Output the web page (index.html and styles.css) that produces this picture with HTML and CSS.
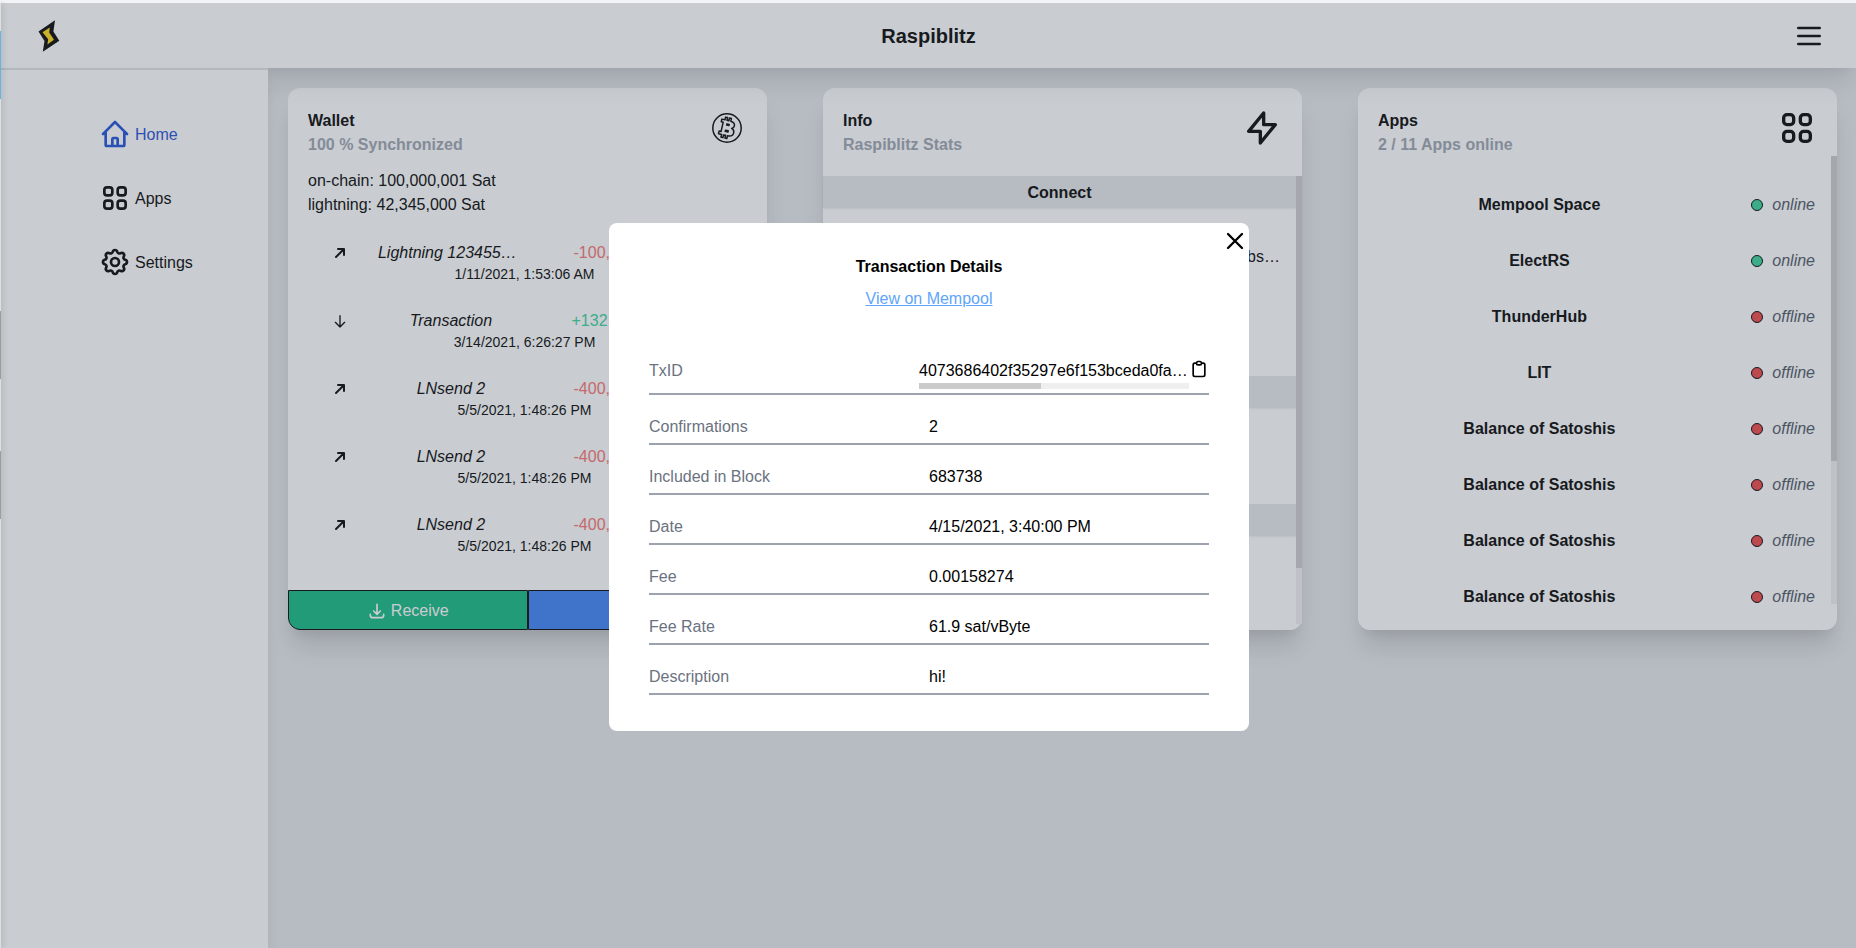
FILE: index.html
```html
<!DOCTYPE html>
<html lang="en">
<head>
<meta charset="utf-8">
<title>Raspiblitz</title>
<link rel="stylesheet" href="styles.css">
</head>
<body>
<div class="edge"></div>
<div class="app">
  <header class="topbar">
    <svg class="logo" viewBox="0 0 22 32"><path d="M.5 11.5 17 .3 15.400 11.500 21.300 20.800 4.800 31.800 6.500 21Z" fill="#000"/><path d="M4.500 12.300 11.800 7.500 11.200 12.600 16 19.800 9.400 24.600 10.200 19.300Z" fill="#ffda10"/></svg>
    <h1 class="brand">Raspiblitz</h1>
    <button class="icon-btn menu-btn" aria-label="Menu"><svg class="i32" viewBox="0 0 24 24"><path d="M4 6h16M4 12h16M4 18h16"/></svg></button>
  </header>
  <div class="body">
    <nav class="sidebar">
      <a class="nav-link active" href="#home"><svg class="i32" viewBox="0 0 24 24"><path d="M3 12l2-2m0 0l7-7 7 7M5 10v10a1 1 0 001 1h3m10-11l2 2m-2-2v10a1 1 0 01-1 1h-3m-6 0a1 1 0 001-1v-4a1 1 0 011-1h2a1 1 0 011 1v4a1 1 0 001 1m-6 0h6"/></svg><span>Home</span></a>
      <a class="nav-link" href="#apps"><svg class="i32" viewBox="0 0 24 24"><path d="M4 6a2 2 0 012-2h2a2 2 0 012 2v2a2 2 0 01-2 2H6a2 2 0 01-2-2V6zM14 6a2 2 0 012-2h2a2 2 0 012 2v2a2 2 0 01-2 2h-2a2 2 0 01-2-2V6zM4 16a2 2 0 012-2h2a2 2 0 012 2v2a2 2 0 01-2 2H6a2 2 0 01-2-2v-2zM14 16a2 2 0 012-2h2a2 2 0 012 2v2a2 2 0 01-2 2h-2a2 2 0 01-2-2v-2z"/></svg><span>Apps</span></a>
      <a class="nav-link" href="#settings"><svg class="i32" viewBox="0 0 24 24"><path d="M10.325 4.317c.426-1.756 2.924-1.756 3.35 0a1.724 1.724 0 002.573 1.066c1.543-.94 3.31.826 2.37 2.37a1.724 1.724 0 001.065 2.572c1.756.426 1.756 2.924 0 3.35a1.724 1.724 0 00-1.066 2.573c.94 1.543-.826 3.31-2.37 2.37a1.724 1.724 0 00-2.572 1.065c-.426 1.756-2.924 1.756-3.35 0a1.724 1.724 0 00-2.573-1.066c-1.543.94-3.31-.826-2.37-2.37a1.724 1.724 0 00-1.065-2.572c-1.756-.426-1.756-2.924 0-3.35a1.724 1.724 0 001.066-2.573c-.94-1.543.826-3.31 2.37-2.37.996.608 2.296.07 2.572-1.065z"/><path d="M15 12a3 3 0 11-6 0 3 3 0 016 0z"/></svg><span>Settings</span></a>
    </nav>
    <main class="cards">
      <section class="card">
        <div class="card-head">
          <div class="card-text"><h2 class="card-title">Wallet</h2><p class="card-sub">100 % Synchronized</p></div>
          <svg class="i40" viewBox="0 0 40 40"><g stroke-width="1.500"><circle cx="20" cy="20" r="14.200"/><g transform="rotate(13 20 20)"><path d="M13 12.500h3.200V9.700h2v2.800h2V9.700h2v2.800c3 .3 4.500 1.600 4.500 3.700 0 1.500-.8 2.600-2 3.200 1.900.6 2.900 1.900 2.900 3.800 0 2.700-1.800 4.200-5.400 4.300v2.800h-2v-2.800h-2v2.800h-2v-2.800H13v-2.700h2v-9.600h-2z"/><path d="M19 16h2.300v1.200H19zM19 22.500h2.800v1.200H19z"/></g></g></svg>
        </div>
        <div class="balances"><p>on-chain: 100,000,001 Sat</p><p>lightning: 42,345,000 Sat</p></div>
        <ul class="tx-list">
          <li class="tx"><span class="tx-icon"><svg class="i16 out" viewBox="0 0 24 24"><path d="M6 18L18 6M9 6h9v9"/></svg></span><span class="tx-name">Lightning 1234556789</span><span class="tx-amount minus">-100,000,000 Sat</span><time class="tx-date">1/11/2021, 1:53:06 AM</time></li>
          <li class="tx"><span class="tx-icon"><svg class="i16" viewBox="0 0 24 24"><path d="M19 14l-7 7m0 0l-7-7m7 7V4"/></svg></span><span class="tx-name">Transaction</span><span class="tx-amount plus">+132,000,000 Sat</span><time class="tx-date">3/14/2021, 6:26:27 PM</time></li>
          <li class="tx"><span class="tx-icon"><svg class="i16 out" viewBox="0 0 24 24"><path d="M6 18L18 6M9 6h9v9"/></svg></span><span class="tx-name">LNsend 2</span><span class="tx-amount minus">-400,000,000 Sat</span><time class="tx-date">5/5/2021, 1:48:26 PM</time></li>
          <li class="tx"><span class="tx-icon"><svg class="i16 out" viewBox="0 0 24 24"><path d="M6 18L18 6M9 6h9v9"/></svg></span><span class="tx-name">LNsend 2</span><span class="tx-amount minus">-400,000,000 Sat</span><time class="tx-date">5/5/2021, 1:48:26 PM</time></li>
          <li class="tx"><span class="tx-icon"><svg class="i16 out" viewBox="0 0 24 24"><path d="M6 18L18 6M9 6h9v9"/></svg></span><span class="tx-name">LNsend 2</span><span class="tx-amount minus">-400,000,000 Sat</span><time class="tx-date">5/5/2021, 1:48:26 PM</time></li>
        </ul>
        <div class="actions">
          <button class="action receive"><svg class="i20" viewBox="0 0 24 24"><path d="M4 16v1a3 3 0 003 3h10a3 3 0 003-3v-1m-4-4l-4 4m0 0l-4-4m4 4V4"/></svg>Receive</button>
          <button class="action send" aria-label="Send"></button>
        </div>
      </section>
      <section class="card">
        <div class="card-head">
          <div class="card-text"><h2 class="card-title">Info</h2><p class="card-sub">Raspiblitz Stats</p></div>
          <svg class="i40" viewBox="0 0 24 24"><path d="M13 10V3L4 14h7v7l9-11h-7z"/></svg>
        </div>
        <div class="scroll info-scroll">
          <div class="scroll-content">
            <h3 class="band">Connect</h3>
            <div class="info-body tall"><p class="info-value">/jobs…</p></div>
            <h3 class="band"></h3>
            <div class="info-body"></div>
            <h3 class="band"></h3>
          </div>
          <div class="track"><div class="thumb info-thumb"></div></div>
        </div>
      </section>
      <section class="card">
        <div class="card-head">
          <div class="card-text"><h2 class="card-title">Apps</h2><p class="card-sub">2 / 11 Apps online</p></div>
          <svg class="i40" viewBox="0 0 24 24"><path d="M4 6a2 2 0 012-2h2a2 2 0 012 2v2a2 2 0 01-2 2H6a2 2 0 01-2-2V6zM14 6a2 2 0 012-2h2a2 2 0 012 2v2a2 2 0 01-2 2h-2a2 2 0 01-2-2V6zM4 16a2 2 0 012-2h2a2 2 0 012 2v2a2 2 0 01-2 2H6a2 2 0 01-2-2v-2zM14 16a2 2 0 012-2h2a2 2 0 012 2v2a2 2 0 01-2 2h-2a2 2 0 01-2-2v-2z"/></svg>
        </div>
        <div class="scroll">
          <ul class="scroll-content app-list">
            <li class="app-row"><span class="app-name">Mempool Space</span><span class="status"><i class="dot on"></i>online</span></li>
            <li class="app-row"><span class="app-name">ElectRS</span><span class="status"><i class="dot on"></i>online</span></li>
            <li class="app-row"><span class="app-name">ThunderHub</span><span class="status"><i class="dot"></i>offline</span></li>
            <li class="app-row"><span class="app-name">LIT</span><span class="status"><i class="dot"></i>offline</span></li>
            <li class="app-row"><span class="app-name">Balance of Satoshis</span><span class="status"><i class="dot"></i>offline</span></li>
            <li class="app-row"><span class="app-name">Balance of Satoshis</span><span class="status"><i class="dot"></i>offline</span></li>
            <li class="app-row"><span class="app-name">Balance of Satoshis</span><span class="status"><i class="dot"></i>offline</span></li>
            <li class="app-row"><span class="app-name">Balance of Satoshis</span><span class="status"><i class="dot"></i>offline</span></li>
          </ul>
          <div class="track"><div class="thumb app-thumb"></div></div>
        </div>
      </section>
    </main>
  </div>
</div>
<div class="overlay">
  <div class="modal" role="dialog" aria-modal="true" aria-labelledby="modal-title">
    <div class="modal-close"><button class="icon-btn" aria-label="Close"><svg class="i28" viewBox="0 0 24 24"><path d="M6 18L18 6M6 6l12 12"/></svg></button></div>
    <h2 class="modal-title" id="modal-title">Transaction Details</h2>
    <a class="modal-link" href="#mempool">View on Mempool</a>
    <dl class="details">
      <div class="detail txid"><dt>TxID</dt><dd class="txid-value"><div class="txid-text">4073686402f35297e6f153bceda0fad51645b35243f21324760c1774f384fdf9</div><div class="track-x"><div class="thumb-x"></div></div></dd><dd><button class="icon-btn" aria-label="Copy"><svg class="i20" viewBox="0 0 24 24"><path d="M9 5H7a2 2 0 00-2 2v12a2 2 0 002 2h10a2 2 0 002-2V7a2 2 0 00-2-2h-2M9 5a2 2 0 002 2h2a2 2 0 002-2M9 5a2 2 0 012-2h2a2 2 0 012 2"/></svg></button></dd></div>
      <div class="detail"><dt>Confirmations</dt><dd>2</dd></div>
      <div class="detail"><dt>Included in Block</dt><dd>683738</dd></div>
      <div class="detail"><dt>Date</dt><dd>4/15/2021, 3:40:00 PM</dd></div>
      <div class="detail"><dt>Fee</dt><dd>0.00158274</dd></div>
      <div class="detail"><dt>Fee Rate</dt><dd>61.9 sat/vByte</dd></div>
      <div class="detail"><dt>Description</dt><dd>hi!</dd></div>
    </dl>
  </div>
</div>
</body>
</html>
```
FILE: styles.css
```css
* { box-sizing: border-box; }
html { height: 100%; }
body {
  margin: 0;
  height: 100%;
  display: flex;
  overflow: hidden;
  padding-top: 3px;
  background: #f3f4f8;
  color: #000;
  font: 16px/24px "Liberation Sans", Arial, sans-serif;
}
h1, h2, h3, p, ul, dl, dd { margin: 0; padding: 0; }
ul { list-style: none; }
button { font: inherit; color: inherit; cursor: pointer; }
svg {
  display: block;
  flex: none;
  fill: none;
  stroke: currentColor;
  stroke-width: 2;
  stroke-linecap: round;
  stroke-linejoin: round;
}
.i16 { width: 16px; height: 16px; }
.i20 { width: 20px; height: 20px; }
.i28 { width: 28px; height: 28px; }
.i32 { width: 32px; height: 32px; }
.i40 { width: 40px; height: 40px; }
.icon-btn { display: block; padding: 0; border: 0; background: none; }

/* window behind the page, seen along the left side */
.edge {
  position: relative;
  z-index: 20;
  width: 1px;
  background: linear-gradient(#dde0e0 28px, #62b5e5 28px 96px, #dde0e0 96px 308px, #9b9e9e 308px 376px, #dde0e0 376px 448px, #9b9e9e 448px 516px, #dde0e0 516px);
  box-shadow: 0 0 6px rgba(0, 0, 0, .5);
}
.app { flex: 1; display: flex; flex-direction: column; min-width: 0; }

.topbar {
  position: relative;
  z-index: 2;
  display: grid;
  grid-template-columns: 1fr auto 1fr;
  align-items: center;
  height: 65px;
  padding: 0 31px;
  background: #fff;
  box-shadow: 0 20px 25px -5px rgba(0, 0, 0, .1), 0 10px 10px -5px rgba(0, 0, 0, .04);
}
.logo { width: 22px; height: 32px; margin-left: 6px; stroke: none; }
.brand { font-size: 20px; line-height: 28px; }
.menu-btn { justify-self: end; }

.body { flex: 1; display: flex; background: #e5e7eb; }
.sidebar {
  position: relative;
  z-index: 3;
  display: flex;
  flex-direction: column;
  gap: 32px;
  width: 267px;
  flex: none;
  padding: 48px 0 0 98px;
  border-top: 2px solid #e0e2e6;
  background: #fff;
  box-shadow: 0 10px 15px -3px rgba(0, 0, 0, .1);
}
.nav-link { display: flex; align-items: center; gap: 4px; color: #000; text-decoration: none; }
.nav-link span { padding-top: 2px; }
.nav-link.active { color: #1d4ed8; }

.cards {
  flex: 1;
  display: grid;
  grid-template-columns: repeat(3, minmax(0, 1fr));
  align-items: start;
  gap: 56px;
  padding: 20px 19px 20px 20px;
}
.card {
  display: flex;
  flex-direction: column;
  height: 542px;
  border-radius: 12px;
  background: #fff;
  box-shadow: 0 20px 25px -5px rgba(0, 0, 0, .14), 0 10px 10px -5px rgba(0, 0, 0, .06);
}
.card-head { display: flex; justify-content: space-between; height: 68px; padding: 20px 20px 0; }
.card-text { padding-top: 1px; }
.card-title, .card-sub { font-size: 16px; line-height: 24px; font-weight: bold; }
.card-sub { color: #9ca3af; }
.balances { padding: 13px 20px 12px; }
.tx-list { padding: 0 26px 0 20px; }
.tx {
  display: grid;
  grid-template-columns: 15% 36% 1fr;
  padding: 12px 0 14px;
  text-align: center;
}
.tx-icon { display: flex; align-items: center; justify-content: center; }
.out { stroke-width: 3; }
.tx-name {
  margin: 0 5px;
  overflow: hidden;
  text-overflow: ellipsis;
  white-space: nowrap;
  font-style: italic;
}
.minus { color: #f87171; }
.plus { color: #34d399; }
.tx-date { grid-column: 1 / -1; font-size: 14px; line-height: 18px; }
.actions { display: flex; margin-top: auto; }
.action {
  flex: 1;
  display: flex;
  align-items: center;
  justify-content: center;
  gap: 4px;
  height: 40px;
  padding: 2px 0 0;
  border: 1px solid #000;
  color: #fff;
}
.receive { background: #10b981; border-bottom-left-radius: 12px; }
.send { background: #3b82f6; border-bottom-right-radius: 12px; }

.scroll { display: flex; height: 448px; }
.scroll-content { flex: 1; min-width: 0; }
.track { width: 6px; background: #efefef; }
.thumb { background: #cbcbcb; }
.info-thumb { height: 87.5%; }
.app-thumb { height: 68%; }
.track-x { height: 6px; background: #efefef; }
.thumb-x { width: 45%; height: 100%; background: #cbcbcb; }

.info-scroll { margin-top: 20px; }
.band {
  height: 32px;
  padding: 5px 4px 3px;
  background: #e5e7eb;
  box-shadow: 0 1px 2px rgba(0, 0, 0, .08);
  font-size: 16px;
  text-align: center;
}
.info-body { min-height: 96px; padding: 37px 16px; }
.tall { min-height: 168px; }
.info-value { text-align: right; }

.app-list { padding-top: 21px; }
.app-row { display: flex; align-items: center; height: 56px; padding: 0 16px; }
.app-name { width: 75%; font-weight: bold; text-align: center; }
.status {
  flex: 1;
  display: flex;
  align-items: center;
  justify-content: flex-end;
  gap: 9px;
  color: #4b5563;
  font-style: italic;
}
.dot { width: 12px; height: 12px; border: 1px solid #000; border-radius: 50%; background: #ef4444; }
.dot.on { background: #34d399; }

.overlay {
  position: fixed;
  z-index: 10;
  top: 3px;
  left: 1px;
  right: 0;
  height: 100vh;
  display: flex;
  align-items: center;
  justify-content: center;
  padding-left: 1px;
  background: rgba(75, 85, 99, .3);
}
.modal {
  width: 640px;
  padding: 4px 0 36px;
  border-radius: 8px;
  background: #fff;
  text-align: center;
}
.modal-close { display: flex; justify-content: flex-end; }
.modal-title { margin-bottom: 8px; font-size: 16px; line-height: 24px; }
.modal-link { color: #60a5fa; }
.details { display: grid; gap: 16px; padding: 44px 40px 0; text-align: left; }
.detail {
  display: grid;
  grid-template-columns: 1fr 1fr;
  padding: 4px 0;
  border-bottom: 2px solid #9ca3af;
}
.detail dt { color: #6b7280; }
.detail.txid { grid-template-columns: 270px minmax(0, 1fr) auto; }
.txid-text { overflow: hidden; text-overflow: ellipsis; white-space: nowrap; }
```
